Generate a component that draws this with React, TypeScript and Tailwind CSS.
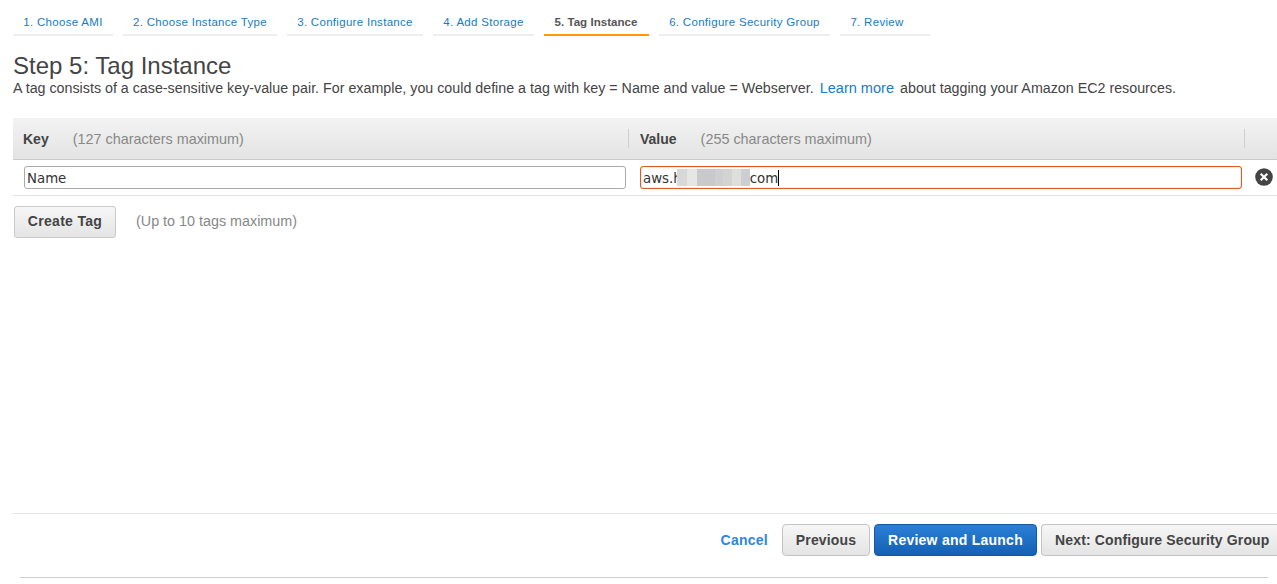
import React from "react";

const tabs = [
  { label: "1. Choose AMI", w: "w-[100px]" },
  { label: "2. Choose Instance Type", w: "w-[154px]" },
  { label: "3. Configure Instance", w: "w-[136px]" },
  { label: "4. Add Storage", w: "w-[101px]" },
  { label: "5. Tag Instance", w: "w-[105px]", active: true },
  { label: "6. Configure Security Group", w: "w-[171px]" },
  { label: "7. Review", w: "w-[90px] pr-[16px]" },
];

const blurs = [
  "w-[10px] bg-[#d8d8d8]",
  "w-[10px] bg-[#e6e6e4]",
  "w-[18px] bg-[#c9c9cb]",
  "w-[8px] bg-[#cfcfcf]",
  "w-[9px] bg-[#d3d3d3]",
  "w-[9px] bg-[#dededb]",
  "w-[9px] bg-[#cdced2]",
];

export default function App() {
  return (
    <div className="w-[1277px] h-[584px] overflow-hidden bg-white flex flex-col font-['Liberation_Sans',Arial,sans-serif] text-[#444]">
      <div className="flex gap-[10px] pl-[13px] pt-[12px] h-[36px]">
        {tabs.map((t) => (
          <div
            key={t.label}
            className={`${t.w} h-[24px] text-center text-[11.5px] leading-[20px] border-b-2 whitespace-nowrap ${
              t.active
                ? "border-[#ff9900] text-[#555] font-bold tracking-[0.05px] pr-[1px]"
                : "border-[#eeeeee] text-[#1a7abf] tracking-[0.3px]"
            }`}
          >
            {t.label}
          </div>
        ))}
      </div>

      <h1 className="ml-[13px] mt-[16px] text-[24px] leading-[28px] font-normal text-[#444]">Step 5: Tag Instance</h1>
      <p className="ml-[13px] -mt-[1px] text-[14.27px] leading-[18px] whitespace-nowrap text-[#444]">
        A tag consists of a case-sensitive key-value pair. For example, you could define a tag with key = Name and value = Webserver.
        <a className="text-[#1a7bc9] text-[14.55px] ml-[6px] mr-[6px]">Learn more</a>
        about tagging your Amazon EC2 resources.
      </p>

      <div className="ml-[13px] mt-[21px] h-[42px] flex items-center bg-gradient-to-b from-[#f3f3f3] to-[#e3e3e3] border-b border-[#c9c9c9] text-[14.4px]">
        <div className="w-[615px] pl-[10px] pt-[2px] flex items-center">
          <span className="font-bold text-[14px] text-[#444]">Key</span>
          <span className="ml-[24px] text-[#888]">(127 characters maximum)</span>
        </div>
        <div className="w-[616px] h-[19px] border-l border-[#cfcfcf] pl-[11px] pt-[2px] flex items-center">
          <span className="font-bold text-[14px] text-[#444]">Value</span>
          <span className="ml-[24px] text-[#888]">(255 characters maximum)</span>
        </div>
        <div className="h-[19px] border-l border-[#cfcfcf]" />
      </div>

      <div className="ml-[13px] h-[36px] flex items-center border-b border-[#e4e4e4] font-['DejaVu_Sans',sans-serif] text-[13.33px] text-[#333]">
        <div className="ml-[11px] w-[602px] h-[23px] rounded-[3px] border border-[#aaa] pl-[2px] leading-[23px]">Name</div>
        <div className="ml-[14px] w-[602px] h-[23px] rounded-[3px] border border-[#dd5b26] shadow-[inset_0_0_1px_#dd5b26] pl-[2px] flex items-center">
          <span className="leading-[23px] pt-[1px]">aws.h</span>
          <span className="flex h-[17px] -ml-[5px]">
            {blurs.map((b, i) => (
              <span key={i} className={`${b} h-full`} />
            ))}
          </span>
          <span className="leading-[23px] pt-[1px]">com</span>
          <span className="w-px h-[16px] bg-black" />
        </div>
        <svg className="ml-[13px] -mt-[1px]" width="18" height="18" viewBox="0 0 18 18">
          <circle cx="9" cy="9" r="8.8" fill="#444" />
          <path d="M5.7 5.7 12.3 12.3 M12.3 5.7 5.7 12.3" stroke="#fff" strokeWidth="2.2" strokeLinecap="butt" />
        </svg>
      </div>

      <div className="ml-[14px] mt-[9px] flex items-center h-[33px]">
        <button className="w-[102px] h-[32px] rounded-[3px] border border-[#c9c9c9] bg-gradient-to-b from-[#f6f6f6] to-[#e4e4e4] text-[14px] font-bold tracking-[0.3px] text-[#444]">
          Create Tag
        </button>
        <span className="ml-[20px] text-[14.35px] text-[#888]">(Up to 10 tags maximum)</span>
      </div>

      <div className="ml-[13px] mt-[275px] h-[64px] border-t border-[#e6e6e6] flex items-start justify-end pt-[10px] text-[14px] font-bold tracking-[0.25px]">
        <a className="text-[#2f86e0] mr-[14px] leading-[32px]">Cancel</a>
        <button className="w-[88px] h-[32px] rounded-[4px] border border-[#c4c4c4] bg-gradient-to-b from-[#f6f6f6] to-[#e4e4e4] text-[#444] mr-[4px] tracking-[0.15px]">
          Previous
        </button>
        <button className="w-[163px] h-[32px] rounded-[4px] border border-[#15589f] bg-gradient-to-b from-[#2a80d6] to-[#1460b4] text-white mr-[4px]">
          Review and Launch
        </button>
        <button className="w-[236px] h-[32px] rounded-l-[4px] border border-r-0 border-[#c4c4c4] bg-gradient-to-b from-[#f6f6f6] to-[#e4e4e4] text-[#444] text-left pl-[13px] tracking-[0.15px] whitespace-nowrap">
          Next: Configure Security Group
        </button>
      </div>
      <div className="ml-[20px] w-[1248px] border-t border-[#cfcfcf]" />
    </div>
  );
}
